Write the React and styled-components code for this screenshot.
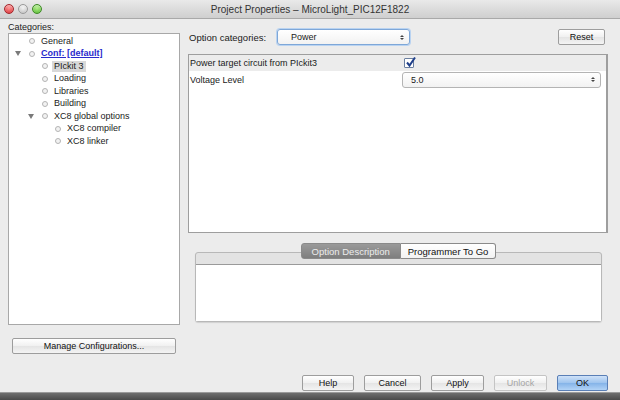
import React from "react";
import styled, { createGlobalStyle, css } from "styled-components";

const Global = createGlobalStyle`
  html, body { margin: 0; padding: 0; background: #ececec; }
  body { font-family: "Liberation Sans", Arial, sans-serif; font-size: 9px; color: #1a1a1a; }
  #root { width: 620px; height: 400px; overflow: hidden; }
`;

const Window = styled.div`
  width: 620px;
  height: 400px;
  display: flex;
  flex-direction: column;
  background: #ececec;
`;

const TitleBar = styled.div`
  height: 18px;
  flex: none;
  display: flex;
  align-items: center;
  position: relative;
  background: linear-gradient(#e9e9e9, #cfcfcf);
  border-bottom: 1px solid #a9a9a9;
`;

const Lights = styled.div`
  display: flex;
  gap: 4px;
  padding-left: 4px;
`;

const Light = styled.span`
  width: 10px;
  height: 10px;
  border-radius: 50%;
  background: ${(p) => p.$c};
  border: 1px solid ${(p) => p.$b};
  box-sizing: border-box;
  box-shadow: inset 0 1px 2px rgba(255,255,255,0.6);
`;

const Title = styled.div`
  position: absolute;
  left: 0;
  right: 0;
  text-align: center;
  font-size: 10px;
  color: #333;
  pointer-events: none;
`;

const Body = styled.div`
  flex: 1;
  display: flex;
  flex-direction: column;
`;

const Columns = styled.div`
  display: flex;
  gap: 8px;
  padding-left: 8px;
`;

const LeftCol = styled.div`
  width: 172px;
  display: flex;
  flex-direction: column;
`;

const CatLabel = styled.div`
  height: 12px;
  line-height: 12px;
  margin-top: 2px;
  font-size: 9px;
  color: #222;
`;

const TreeBox = styled.div`
  height: 292px;
  box-sizing: border-box;
  background: #fff;
  border: 1px solid #a8a8a8;
  padding-top: 1px;
`;

const TreeRow = styled.div`
  height: 12.5px;
  display: flex;
  align-items: center;
  padding-left: ${(p) => 4 + p.$level * 13}px;
`;

const Arrow = styled.span`
  width: 10px;
  height: 10px;
  display: flex;
  align-items: center;
  justify-content: center;
  flex: none;
  &::before {
    content: "";
    display: ${(p) => (p.$show ? "block" : "none")};
    border-left: 3px solid transparent;
    border-right: 3px solid transparent;
    border-top: 5px solid #7a7a7a;
  }
`;

const Bullet = styled.span`
  width: 4px;
  height: 4px;
  border-radius: 50%;
  border: 1px solid #b4b4b4;
  background: #f2f2f2;
  margin-left: 6px;
  margin-right: 6px;
  flex: none;
`;

const TreeText = styled.span`
  line-height: 11px;
  padding: 0 2px;
  margin-left: -2px;
  ${(p) =>
    p.$link &&
    css`
      color: #2a2acc;
      font-weight: bold;
      text-decoration: underline;
    `}
  ${(p) =>
    p.$selected &&
    css`
      background: #d8d8d8;
    `}
`;

const Button = styled.button`
  font-family: "Liberation Sans", Arial, sans-serif;
  font-size: 9px;
  height: 16px;
  box-sizing: border-box;
  border: 1px solid #9d9d9d;
  border-radius: 2px;
  background: linear-gradient(#ffffff, #f0f0f0 50%, #e4e4e4 51%, #f4f4f4);
  color: #111;
  padding: 0 8px;
  display: flex;
  align-items: center;
  justify-content: center;
  ${(p) => p.$w && css`width: ${p.$w}px;`}
  ${(p) =>
    p.$disabled &&
    css`
      color: #a5a5a5;
      border-color: #c4c4c4;
    `}
  ${(p) =>
    p.$default &&
    css`
      border-color: #5a7fb6;
      background: linear-gradient(#cfe2f8, #9dc3ee 50%, #84b3e8 51%, #b2d3f6);
    `}
`;

const ManageButton = styled(Button)`
  margin: 13px 4px 0 4px;
`;

const RightCol = styled.div`
  width: 420px;
  display: flex;
  flex-direction: column;
`;

const TopRow = styled.div`
  display: flex;
  align-items: center;
  margin-top: 10px;
  height: 16px;
`;

const OptLabel = styled.span`
  margin-left: 1px;
  width: 88px;
  font-size: 9.5px;
`;

const Popup = styled.div`
  box-sizing: border-box;
  height: 16px;
  width: ${(p) => p.$w}px;
  border: 1px solid ${(p) => (p.$focus ? "#7ea7d8" : "#b4b4b4")};
  border-radius: 3px;
  background: linear-gradient(#ffffff, #f2f2f2);
  display: flex;
  align-items: center;
  justify-content: space-between;
  padding: 0 5px 0 ${(p) => p.$pl}px;
  ${(p) => p.$focus && css`box-shadow: 0 0 0 1px #b9d3f1;`}
`;

const Stepper = styled.span`
  display: flex;
  flex-direction: column;
  gap: 1px;
  &::before, &::after {
    content: "";
    border-left: 2px solid transparent;
    border-right: 2px solid transparent;
  }
  &::before { border-bottom: 2px solid #444; }
  &::after { border-top: 2px solid #444; }
`;

const Spacer = styled.div`
  flex: 1;
`;

const ResetButton = styled(Button)`
  margin-right: 3px;
`;

const Table = styled.div`
  margin-top: 9px;
  height: 179px;
  box-sizing: border-box;
  background: #fff;
  border: 1px solid #9e9e9e;
  border-right-width: 2px;
  display: flex;
  flex-direction: column;
`;

const PropRow = styled.div`
  display: grid;
  grid-template-columns: 212px 1fr;
  align-items: center;
  height: ${(p) => p.$h}px;
  background: ${(p) => (p.$shade ? "#ececec" : "#fff")};
  padding-left: 1px;
`;

const CheckBox = styled.span`
  width: 10px;
  height: 10px;
  box-sizing: border-box;
  border: 1px solid #6b7fa0;
  background: #fff;
  border-radius: 1px;
  margin-left: 2px;
  position: relative;
  display: block;
`;

const CheckMark = styled.svg`
  position: absolute;
  left: 0;
  top: -3px;
`;

const ValuePopup = styled(Popup)`
  margin-right: 5px;
  width: auto;
`;

const TabsArea = styled.div`
  margin: 10px 6px 0 7px;
  position: relative;
  padding-top: 9px;
`;

const Tabs = styled.div`
  position: absolute;
  top: 0;
  left: 0;
  right: 0;
  display: flex;
  justify-content: center;
  z-index: 1;
`;

const Tab = styled.div`
  height: 16px;
  box-sizing: border-box;
  padding: 0 ${(p) => p.$px}px;
  display: flex;
  align-items: center;
  font-size: 9.5px;
  border: 1px solid #8a8a8a;
  ${(p) =>
    p.$active
      ? css`
          background: linear-gradient(#9a9a9a, #7e7e7e);
          color: #ececec;
          border-radius: 3px 0 0 3px;
        `
      : css`
          background: linear-gradient(#ffffff, #f3f3f3);
          color: #111;
          border-left: none;
          border-radius: 0 3px 3px 0;
        `}
`;

const TabPanel = styled.div`
  height: 70px;
  box-sizing: border-box;
  border: 1px solid #b8b8b8;
  border-radius: 3px;
  background: #e3e3e3;
  padding: 11px 0 0 0;
  box-shadow: 0 1px 1px rgba(0,0,0,0.12);
  display: flex;
`;

const TabContent = styled.div`
  flex: 1;
  background: #fff;
  border-top: 1px solid #9a9a9a;
`;

const Footer = styled.div`
  display: flex;
  justify-content: flex-end;
  gap: 10px;
  margin-top: 21px;
  padding-right: 12px;
`;

const BottomEdge = styled.div`
  margin-top: auto;
  height: 7px;
  border-top: 1px solid #9a9a9a;
  background: linear-gradient(#6e6e6e, #4a4a4a);
`;

const tree = [
  { level: 0, text: "General" },
  { level: 0, text: "Conf: [default]", arrow: true, link: true },
  { level: 1, text: "PIckit 3", selected: true },
  { level: 1, text: "Loading" },
  { level: 1, text: "Libraries" },
  { level: 1, text: "Building" },
  { level: 1, text: "XC8 global options", arrow: true },
  { level: 2, text: "XC8 compiler" },
  { level: 2, text: "XC8 linker" },
];

export default function App() {
  return (
    <Window>
      <Global />
      <TitleBar>
        <Lights>
          <Light $c="radial-gradient(circle at 50% 35%, #ff9a9a, #d8262a)" $b="#a3262a" />
          <Light $c="radial-gradient(circle at 50% 35%, #f4f4f4, #b9b9b9)" $b="#9a9a9a" />
          <Light $c="radial-gradient(circle at 50% 35%, #b6f08e, #4fb52a)" $b="#3d8a24" />
        </Lights>
        <Title>Project Properties – MicroLight_PIC12F1822</Title>
      </TitleBar>
      <Body>
        <Columns>
          <LeftCol>
            <CatLabel>Categories:</CatLabel>
            <TreeBox>
              {tree.map((n) => (
                <TreeRow key={n.text} $level={n.level}>
                  <Arrow $show={n.arrow} />
                  <Bullet />
                  <TreeText $link={n.link} $selected={n.selected}>
                    {n.text}
                  </TreeText>
                </TreeRow>
              ))}
            </TreeBox>
            <ManageButton>Manage Configurations...</ManageButton>
          </LeftCol>
          <RightCol>
            <TopRow>
              <OptLabel>Option categories:</OptLabel>
              <Popup $w={133} $pl={13} $focus>
                <span>Power</span>
                <Stepper />
              </Popup>
              <Spacer />
              <ResetButton $w={47}>Reset</ResetButton>
            </TopRow>
            <Table>
              <PropRow $h={16} $shade>
                <span>Power target circuit from PIckit3</span>
                <CheckBox>
                  <CheckMark width="12" height="12" viewBox="0 0 12 12">
                    <path d="M2 6.5 L4.5 9.5 L10 1.5" fill="none" stroke="#1f3f8a" strokeWidth="2" />
                  </CheckMark>
                </CheckBox>
              </PropRow>
              <PropRow $h={17}>
                <span>Voltage Level</span>
                <ValuePopup $pl={8}>
                  <span>5.0</span>
                  <Stepper />
                </ValuePopup>
              </PropRow>
            </Table>
            <TabsArea>
              <Tabs>
                <Tab $active $px={10}>Option Description</Tab>
                <Tab $px={7}>Programmer To Go</Tab>
              </Tabs>
              <TabPanel>
                <TabContent />
              </TabPanel>
            </TabsArea>
          </RightCol>
        </Columns>
        <Footer>
          <Button $w={52}>Help</Button>
          <Button $w={57}>Cancel</Button>
          <Button $w={53}>Apply</Button>
          <Button $w={53} $disabled>Unlock</Button>
          <Button $w={51} $default>OK</Button>
        </Footer>
        <BottomEdge />
      </Body>
    </Window>
  );
}
